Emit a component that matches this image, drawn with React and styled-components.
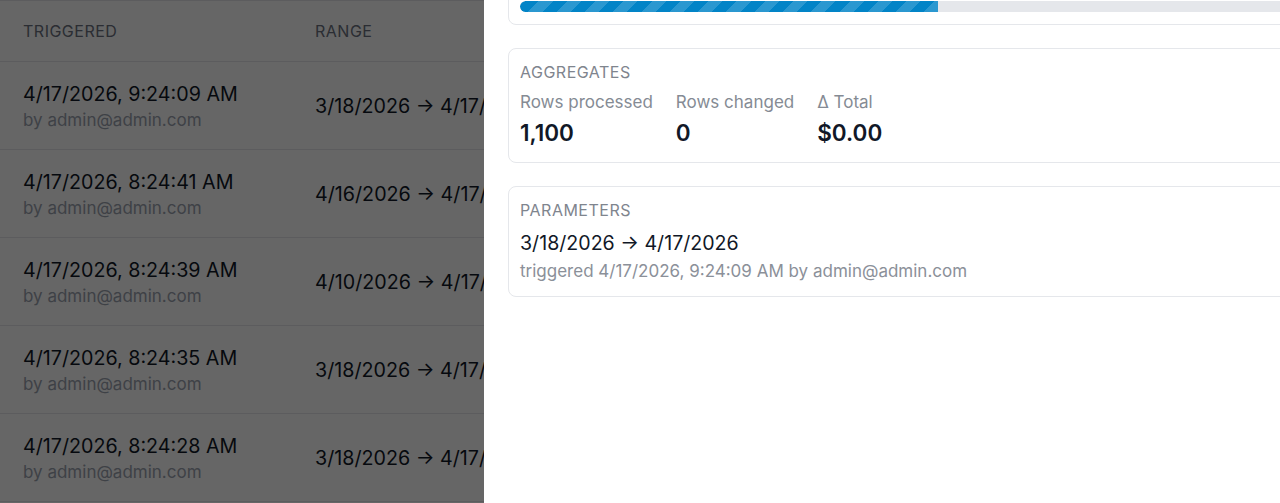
import React, { useLayoutEffect, useRef } from 'react'
import styled, { createGlobalStyle } from 'styled-components'

const GlobalStyle = createGlobalStyle`
  html, body {
    margin: 0;
    padding: 0;
    background: #ffffff;
    font-family: Inter, "Noto Sans", sans-serif;
    color: #111827;
    overflow: hidden;
  }
`

const Page = styled.div`
  width: 1280px;
  height: 503px;
  overflow: hidden;
`

const Table = styled.div`
  display: grid;
  grid-template-columns: 315px 260px 220px 1fr;
  border-top: 1px solid #e5e7eb;
`

const HeadCell = styled.div`
  height: 60px;
  display: flex;
  align-items: center;
  padding-left: ${p => (p.first ? '23px' : '0')};
  font-size: 16px;
  letter-spacing: 0.5px;
  text-transform: uppercase;
  color: #6b7280;
  border-bottom: 1px solid #e5e7eb;
`

const Cell = styled.div`
  height: 87px;
  display: flex;
  flex-direction: column;
  justify-content: center;
  padding-left: ${p => (p.first ? '23px' : '0')};
  border-bottom: 1px solid #e5e7eb;
  white-space: nowrap;
`

const Primary = styled.div`
  font-size: 19.7px;
  line-height: 28px;
  color: #111827;
`

const Secondary = styled.div`
  font-size: 17px;
  line-height: 24px;
  color: #9ca3af;
`

const Overlay = styled.div`
  position: fixed;
  inset: 0;
  background: rgba(0, 0, 0, 0.6);
`

const Drawer = styled.aside`
  position: fixed;
  top: 0;
  bottom: 0;
  left: 484px;
  width: 860px;
  background: #ffffff;
  overflow-y: auto;
  scrollbar-width: none;
  &::-webkit-scrollbar { display: none; }
`

const DrawerBody = styled.div`
  display: flex;
  flex-direction: column;
  gap: 23px;
  padding: 24px 24px 300px;
`

const Card = styled.section`
  border: 1px solid #e5e7eb;
  border-radius: 8px;
  padding: 12px 11px ${p => p.pb || 12}px;
`

const CardLabel = styled.div`
  font-size: 16px;
  line-height: 22px;
  letter-spacing: 0.5px;
  text-transform: uppercase;
  color: #7f858e;
  margin-bottom: ${p => p.gap || 6}px;
`

const ProgressRow = styled.div`
  display: flex;
  justify-content: space-between;
  font-size: 17px;
  color: #374151;
  margin-bottom: 14px;
`

const Track = styled.div`
  height: 11px;
  border-radius: 6px;
  background: #e5e7eb;
  overflow: hidden;
`

const Fill = styled.div`
  height: 100%;
  border-radius: 6px 0 0 6px;
  background-color: #0284c7;
  background-image: repeating-linear-gradient(
    -45deg,
    rgba(255, 255, 255, 0.16) 0 10px,
    transparent 10px 20px
  );
`

const Stats = styled.div`
  display: flex;
  gap: 23px;
`

const Stat = styled.div`
  display: flex;
  flex-direction: column;
`

const StatLabel = styled.div`
  font-size: 17px;
  line-height: 24px;
  color: #858b94;
`

const StatValue = styled.div`
  margin-top: 4px;
  font-size: 22.5px;
  font-weight: 600;
  line-height: 30px;
  color: #111827;
`

const RangeText = styled.div`
  font-size: 19.6px;
  line-height: 28px;
  color: #111827;
`

const Meta = styled.div`
  font-size: 17px;
  line-height: 28px;
  color: #8b9099;
`

const runs = [
  { at: '4/17/2026, 9:24:09 AM', range: '3/18/2026 → 4/17/2026' },
  { at: '4/17/2026, 8:24:41 AM', range: '4/16/2026 → 4/17/2026' },
  { at: '4/17/2026, 8:24:39 AM', range: '4/10/2026 → 4/17/2026' },
  { at: '4/17/2026, 8:24:35 AM', range: '3/18/2026 → 4/17/2026' },
  { at: '4/17/2026, 8:24:28 AM', range: '3/18/2026 → 4/17/2026' },
]

const App = () => {
  const drawerRef = useRef(null)

  useLayoutEffect(() => {
    if (drawerRef.current) drawerRef.current.scrollTop = 100
  }, [])

  return (
    <Page>
      <GlobalStyle />
      <Table>
        <HeadCell first>Triggered</HeadCell>
        <HeadCell>Range</HeadCell>
        <HeadCell>Status</HeadCell>
        <HeadCell>Rows</HeadCell>
        {runs.map((r, i) => (
          <React.Fragment key={i}>
            <Cell first>
              <Primary>{r.at}</Primary>
              <Secondary>by admin@admin.com</Secondary>
            </Cell>
            <Cell><Primary>{r.range}</Primary></Cell>
            <Cell><Primary>completed</Primary></Cell>
            <Cell><Primary>1,100</Primary></Cell>
          </React.Fragment>
        ))}
      </Table>
      <Overlay />
      <Drawer ref={drawerRef}>
        <DrawerBody>
          <Card>
            <CardLabel gap={8}>Progress</CardLabel>
            <ProgressRow>
              <span>Processing rows</span>
              <span>53%</span>
            </ProgressRow>
            <Track>
              <Fill style={{ width: '53.05%' }} />
            </Track>
          </Card>
          <Card pb={14}>
            <CardLabel gap={7}>Aggregates</CardLabel>
            <Stats>
              <Stat>
                <StatLabel>Rows processed</StatLabel>
                <StatValue>1,100</StatValue>
              </Stat>
              <Stat>
                <StatLabel>Rows changed</StatLabel>
                <StatValue>0</StatValue>
              </Stat>
              <Stat>
                <StatLabel>Δ Total</StatLabel>
                <StatValue>$0.00</StatValue>
              </Stat>
            </Stats>
          </Card>
          <Card pb={11}>
            <CardLabel gap={8}>Parameters</CardLabel>
            <RangeText>3/18/2026 → 4/17/2026</RangeText>
            <Meta>triggered 4/17/2026, 9:24:09 AM by admin@admin.com</Meta>
          </Card>
        </DrawerBody>
      </Drawer>
    </Page>
  )
}

export default App
